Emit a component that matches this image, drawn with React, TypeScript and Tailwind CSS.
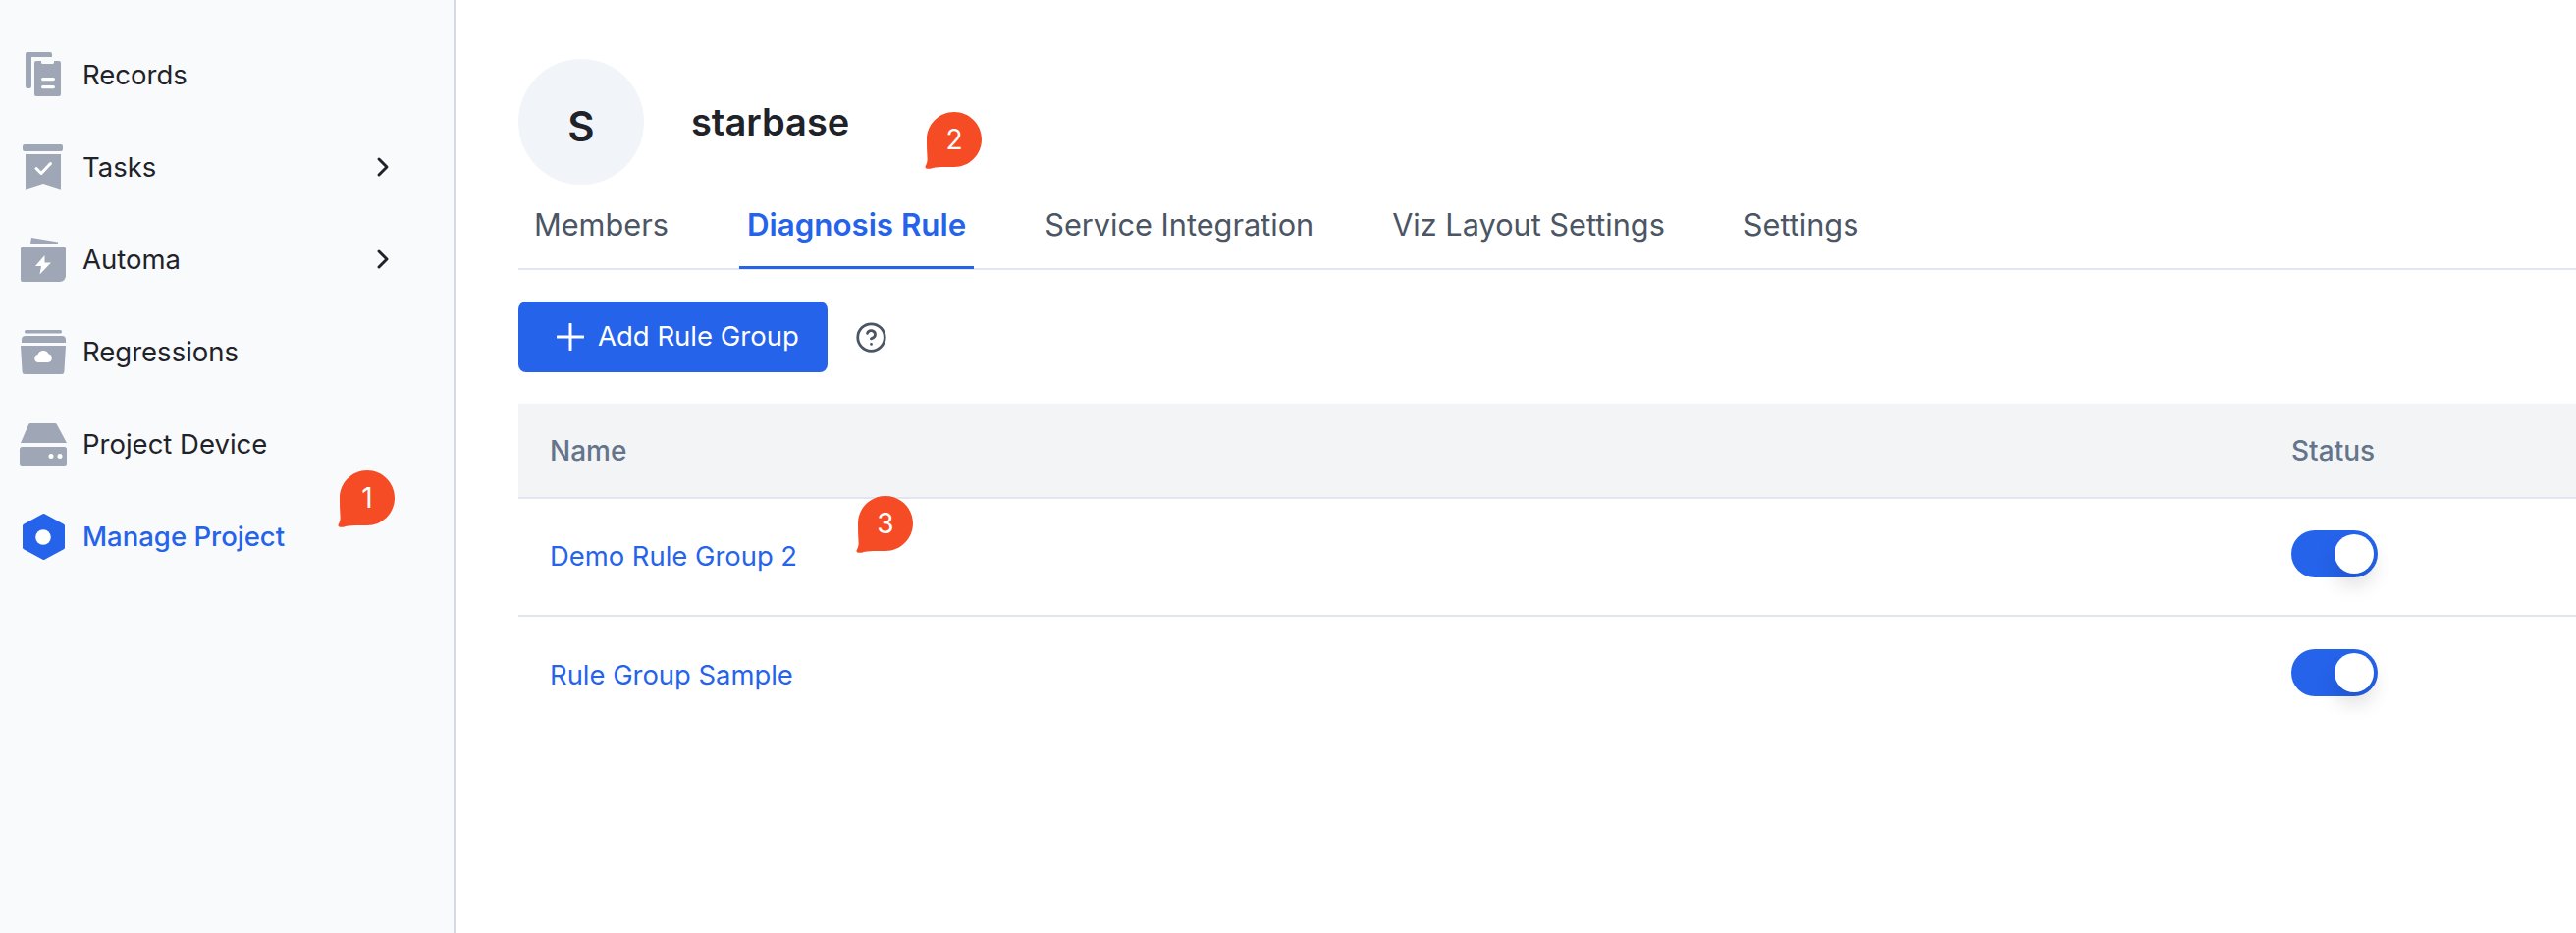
import { ChevronRight, CircleHelp } from "lucide-react";
import type { ReactNode } from "react";

const gray = "#9fa6b5";

const RecordsIcon = () => (
  <svg width={48} height={48} viewBox="0 0 48 48">
    <path
      d="M8 1H31a2 2 0 0 1 2 2V6H12V36a2 2 0 0 1-2 2H8a2 2 0 0 1-2-2V3a2 2 0 0 1 2-2Z"
      fill={gray}
    />
    <path
      d="M17 10H22V11.5a1.5 1.5 0 0 0 1.5 1.5H33.5a1.5 1.5 0 0 0 1.5-1.5V10H40a2 2 0 0 1 2 2V44a2 2 0 0 1-2 2H17a2 2 0 0 1-2-2V12a2 2 0 0 1 2-2Z"
      fill={gray}
    />
    <rect x={22} y={27} width={14} height={3.2} rx={1.6} fill="#fff" />
    <rect x={22} y={35} width={14} height={3.2} rx={1.6} fill="#fff" />
  </svg>
);

const TasksIcon = () => (
  <svg width={48} height={48} viewBox="0 0 48 48">
    <rect x={3} y={1} width={41} height={7} rx={2} fill={gray} />
    <path d="M6 11H42V46a.6.6 0 0 1-.8.6L24 41 6.8 46.6A.6.6 0 0 1 6 46Z" fill={gray} />
    <path
      d="M17 25.5 22 30.5 31.5 20.5"
      fill="none"
      stroke="#fff"
      strokeWidth={3}
      strokeLinecap="round"
      strokeLinejoin="round"
    />
  </svg>
);

const AutomaIcon = () => (
  <svg width={48} height={48} viewBox="0 0 48 48">
    <path d="M12 2 39 6.5V8H11Z" fill={gray} />
    <path
      d="M3 11.5H45a2 2 0 0 1 2 2V41a6 6 0 0 1-6 6H3a2 2 0 0 1-2-2V13.5a2 2 0 0 1 2-2Z"
      fill={gray}
    />
    <path d="M25.5 20 16 31H22L20.5 39.5 32 27.5H25.5Z" fill="#fff" />
  </svg>
);

const RegressionsIcon = () => (
  <svg width={48} height={48} viewBox="0 0 48 48">
    <rect x={5} y={2} width={38} height={3.4} rx={1.5} fill={gray} />
    <path d="M6 8H43a4 4 0 0 1 4 4V15H2V12a4 4 0 0 1 4-4Z" fill={gray} />
    <path d="M1 18H47L45.4 44.5a2.6 2.6 0 0 1-2.6 2.5H5.2a2.6 2.6 0 0 1-2.6-2.5Z" fill={gray} />
    <path
      d="M19 35a4 4 0 0 1-.6-7.9A6 6 0 0 1 29.4 26.2 4.5 4.5 0 0 1 29 35Z"
      fill="#fff"
    />
  </svg>
);

const DeviceIcon = () => (
  <svg width={48} height={48} viewBox="0 0 48 48">
    <path d="M11 3H36a2 2 0 0 1 1.9 1.3L48 23H1L9.1 4.3A2 2 0 0 1 11 3Z" fill={gray} />
    <rect x={0} y={27} width={48} height={19} rx={2.5} fill={gray} />
    <circle cx={32} cy={36.5} r={2.5} fill="#fff" />
    <circle cx={41} cy={36.5} r={2.5} fill="#fff" />
  </svg>
);

const ManageIcon = () => (
  <svg width={48} height={48} viewBox="0 0 48 48">
    <path
      d="M24.5 3 44 13.5V35.5L24.5 46 5 35.5V13.5Z"
      fill="#2563eb"
      stroke="#2563eb"
      strokeWidth={4}
      strokeLinejoin="round"
    />
    <circle cx={24} cy={25} r={7.8} fill="#fff" />
  </svg>
);

const navItems: { label: string; icon: ReactNode; chevron?: boolean; active?: boolean }[] = [
  { label: "Records", icon: <RecordsIcon /> },
  { label: "Tasks", icon: <TasksIcon />, chevron: true },
  { label: "Automa", icon: <AutomaIcon />, chevron: true },
  { label: "Regressions", icon: <RegressionsIcon /> },
  { label: "Project Device", icon: <DeviceIcon /> },
  { label: "Manage Project", icon: <ManageIcon />, active: true },
];

const tabs = ["Members", "Diagnosis Rule", "Service Integration", "Viz Layout Settings", "Settings"];

const rules = ["Demo Rule Group 2", "Rule Group Sample"];

const Badge = ({ n, className }: { n: number; className: string }) => (
  <div className={`absolute h-[58px] w-[58px] ${className}`}>
    <svg width={58} height={58} viewBox="0 0 58 58" className="absolute inset-0">
      <path
        d="M30 0C45.5 0 58 12.5 58 28S45.5 56 30 56C23 56 14 55.5 8 57 4 58.5 0 58 .5 55.5 2 53 3 50 2.5 46 2 40 2 34 2 28 2 12.5 14.5 0 30 0Z"
        fill="#f64c26"
      />
    </svg>
    <span className="absolute top-0 left-[2px] flex h-[56px] w-[56px] items-center justify-center text-[28px] leading-none text-white">
      {n}
    </span>
  </div>
);

const Toggle = () => (
  <div className="flex h-12 w-[88px] items-center justify-end rounded-full bg-[#2563eb] pr-1">
    <div className="h-10 w-10 rounded-full bg-white shadow-[0_12px_20px_rgba(0,0,0,0.13)]" />
  </div>
);

export default function App() {
  return (
    <div className="relative flex h-[950px] w-full overflow-hidden bg-white font-['Inter',sans-serif] text-[#1f2329]">
      <aside className="h-full w-[464px] shrink-0 border-r-2 border-[#d5d9e4] bg-[#f9fafc] pt-[29px]">
        {navItems.map((item) => (
          <div key={item.label} className="flex h-[94px] items-center pl-5">
            {item.icon}
            <span
              className={`ml-4 flex-1 pt-[2px] text-[27.5px] ${
                item.active ? "font-medium text-[#2563eb]" : ""
              }`}
            >
              {item.label}
            </span>
            {item.chevron && (
              <ChevronRight size={32} strokeWidth={2.2} className="mr-[56px] text-[#1f2329]" />
            )}
          </div>
        ))}
      </aside>

      <main className="min-w-0 flex-1 pl-16 pt-[60px]">
        <div className="flex items-center">
          <div className="flex h-32 w-32 items-center justify-center rounded-full bg-[#f1f4f9] pt-[9px] text-[42px] font-semibold">
            S
          </div>
          <h1 className="ml-12 text-[38px] font-semibold leading-none">starbase</h1>
        </div>

        <div className="flex gap-16 border-b-2 border-[#e2e6f0] pl-2">
          {tabs.map((tab) => (
            <div
              key={tab}
              className={`-mb-px h-[86px] border-b-[3px] px-2 pt-[21px] leading-10 ${
                tab === "Diagnosis Rule"
                  ? "border-[#2563eb] text-[31.3px] font-semibold text-[#2563eb]"
                  : "border-transparent text-[30.7px] text-[#4b5563]"
              }`}
            >
              {tab}
            </div>
          ))}
        </div>

        <div className="mt-8 flex items-center">
          <button className="flex h-[72px] w-[315px] items-center gap-[14px] rounded-lg bg-[#2563eb] pl-[39px] text-[27.5px] text-white">
            <svg width={28} height={28} viewBox="0 0 28 28">
              <path d="M14 1V27M1 14H27" stroke="#fff" strokeWidth={3} strokeLinecap="round" />
            </svg>
            Add Rule Group
          </button>
          <CircleHelp size={33} strokeWidth={2} className="ml-7 text-[#4b5563]" />
        </div>

        <div className="mt-8">
          <div className="flex h-[97px] items-center border-b-2 border-[#e2e6f0] bg-[#f3f4f6] text-[28px] font-medium text-[#64748b]">
            <div className="flex-1 pl-8">Name</div>
            <div className="w-[290px]">Status</div>
          </div>
          {rules.map((rule, i) => (
            <div
              key={rule}
              className={`flex h-[120px] items-center text-[27.4px] text-[#2563eb] ${
                i === 0 ? "border-b-2 border-[#e2e6f0]" : ""
              }`}
            >
              <div className="flex-1 pl-8">{rule}</div>
              <div className="-mt-[6px] w-[290px]">
                <Toggle />
              </div>
            </div>
          ))}
        </div>
      </main>

      <Badge n={1} className="left-[344px] top-[479px]" />
      <Badge n={2} className="left-[942px] top-[114px]" />
      <Badge n={3} className="left-[872px] top-[505px]" />
    </div>
  );
}
